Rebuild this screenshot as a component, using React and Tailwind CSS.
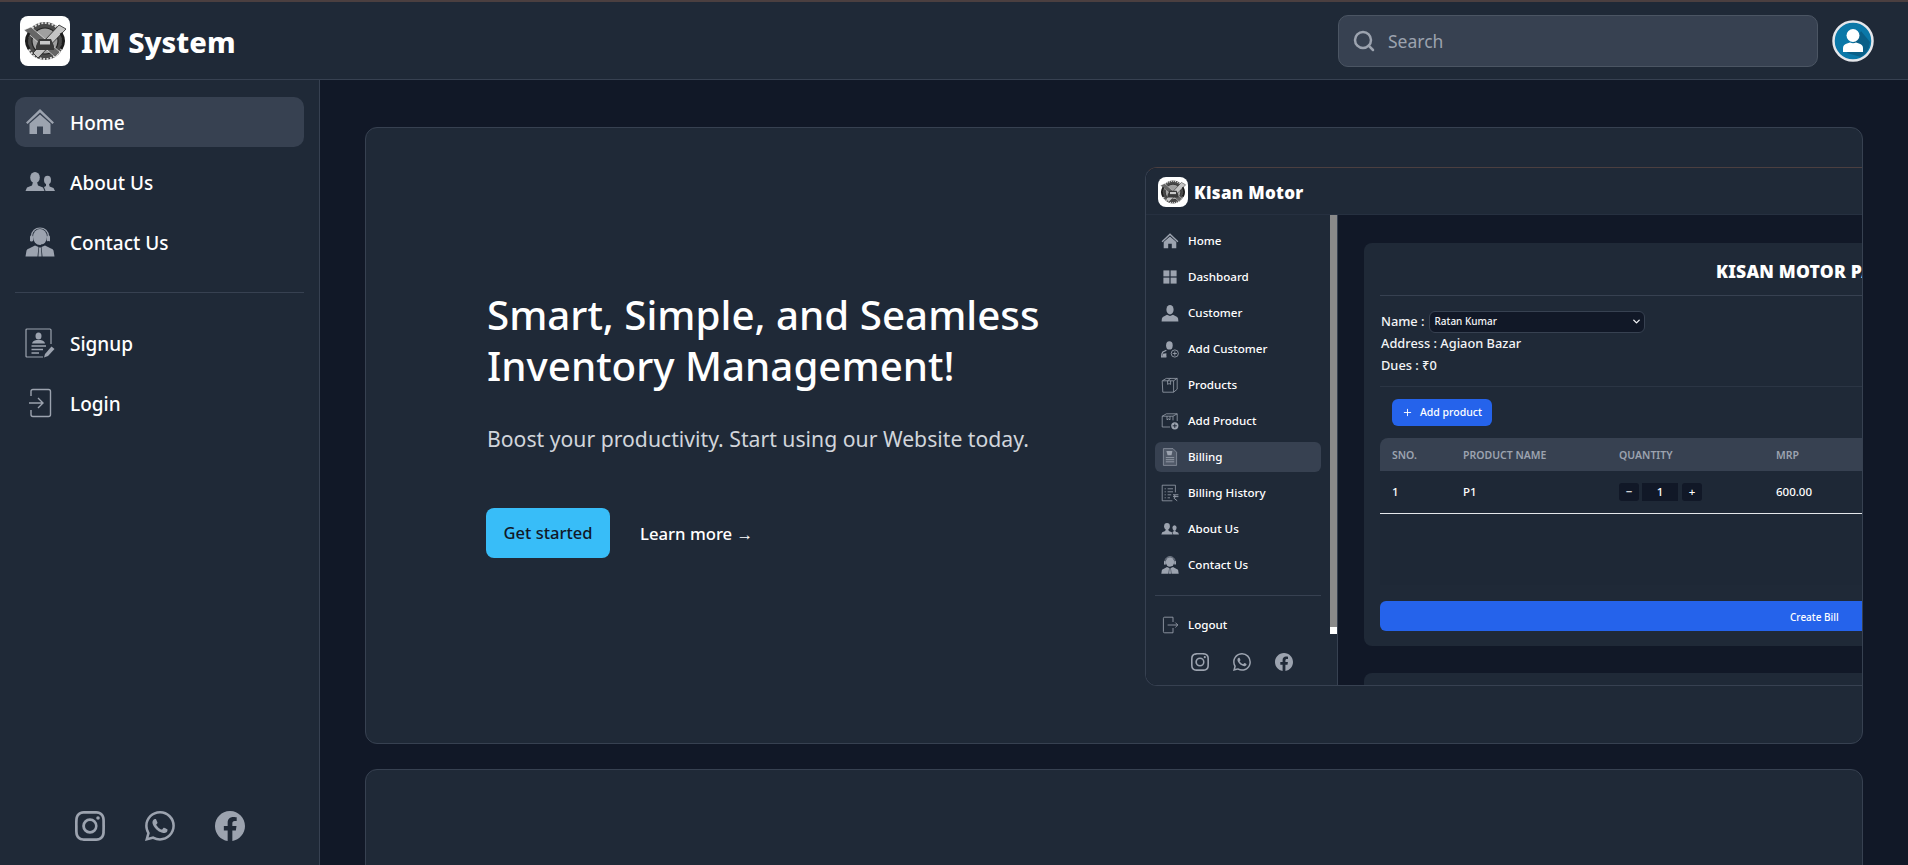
import React from 'react';
import { Search, ChevronDown, Plus } from 'lucide-react';
import { BsInstagram, BsWhatsapp, BsFacebook } from 'react-icons/bs';

const Logo = ({ className }) => (
  <div className={`bg-white rounded-lg flex items-center justify-center shrink-0 ${className}`}>
    <svg viewBox="0 0 50 50" className="w-full h-full">
      <circle cx="25" cy="25" r="19" fill="#4a4a4a" />
      <circle cx="25" cy="25" r="18" fill="none" stroke="#d8d8d8" strokeWidth="2" strokeDasharray="2 1.5" />
      <circle cx="25" cy="25" r="13" fill="#a0a0a0" />
      <circle cx="25" cy="25" r="13" fill="none" stroke="#222" strokeWidth="1.2" />
      <path d="M4 14 L11 11 L40 36 L35 41 Z" fill="#666" stroke="#fff" strokeWidth="0.6" />
      <path d="M46 13 L39 9 L13 37 L18 42 Z" fill="#c4c4c4" stroke="#222" strokeWidth="0.8" />
      <path d="M16 30 L19 23 H31 L34 30 V34 H16 Z" fill="#3a3a3a" />
      <rect x="20" y="25" width="10" height="3.5" fill="#c8c8c8" />
      <path d="M9 17 Q4 25 9 33" fill="none" stroke="#1c1c1c" strokeWidth="3" />
      <path d="M41 17 Q46 25 41 33" fill="none" stroke="#1c1c1c" strokeWidth="3" />
    </svg>
  </div>
);

const HomeIcon = ({ className }) => (
  <svg viewBox="0 0 30 30" fill="currentColor" className={className}>
    <path d="M15 2 L1 15.5 L2.6 17 L15 5.6 L27.4 17 L29 15.5 Z" />
    <path d="M4.5 16.8 L15 7.4 L25.5 16.8 V27 H18 V19.5 H12 V27 H4.5 Z" />
  </svg>
);

const GroupIcon = ({ className }) => (
  <svg viewBox="0 0 30 30" fill="currentColor" className={className}>
    <ellipse cx="10" cy="10.5" rx="4.8" ry="5.5" />
    <path d="M8 15 H12 L13 18.5 L18 20.5 L19.5 24 H0.5 L2 20.5 L7 18.5 Z" />
    <ellipse cx="22.5" cy="13" rx="3.5" ry="4.3" />
    <path d="M21 17 H24 L24.6 19.5 L28.5 21 L30 24 H20.5 L19 20 L21 19 Z" />
  </svg>
);

const AgentIcon = ({ className }) => (
  <svg viewBox="0 0 30 30" className={className}>
    <ellipse cx="15" cy="10" rx="7" ry="8" fill="currentColor" />
    <path d="M6.5 12 V9.5 C6.5 4 10.5 1 15 1 C19.5 1 23.5 4 23.5 9.5 V12" fill="none" stroke="currentColor" strokeWidth="1.2" />
    <rect x="5" y="8.5" width="3" height="6" rx="1.2" fill="currentColor" />
    <rect x="22" y="8.5" width="3" height="6" rx="1.2" fill="currentColor" />
    <path d="M23.5 14 C23 17 20 18 16 18" fill="none" stroke="#1f2937" strokeWidth="1.1" />
    <path d="M10 18.5 L13.5 20 L12.5 29.5 H0.5 L1.5 23.5 Q2 22 4 21.5 Z" fill="currentColor" />
    <path d="M20 18.5 L16.5 20 L17.5 29.5 H29.5 L28.5 23.5 Q28 22 26 21.5 Z" fill="currentColor" />
    <path d="M14 20.5 H16 L16.6 29.5 H13.4 Z" fill="currentColor" />
  </svg>
);

const SignupIcon = ({ className }) => (
  <svg viewBox="0 0 30 30" fill="none" className={className}>
    <path d="M18 29 H2 Q1 29 1 28 V2 Q1 1 2 1 H25 Q26 1 26 2 V16" stroke="currentColor" strokeWidth="1.2" />
    <ellipse cx="13.5" cy="8" rx="3" ry="3.6" fill="currentColor" />
    <path d="M7 15.5 Q7.5 12.5 11.5 12 H15.5 Q19.5 12.5 20 15.5 Z" fill="currentColor" />
    <path d="M6.5 18 H21 M6.5 21.5 H18 M6.5 25 H14" stroke="currentColor" strokeWidth="1.4" />
    <path d="M20 26 L26.5 18.5 L29.5 21 L23 28 L19 29.5 Z" fill="currentColor" />
  </svg>
);

const LoginIcon = ({ className }) => (
  <svg viewBox="0 0 30 30" fill="none" stroke="currentColor" strokeWidth="1.4" className={className}>
    <path d="M6 8 V3.5 Q6 1.5 8 1.5 H23.5 Q25.5 1.5 25.5 3.5 V26.5 Q25.5 28.5 23.5 28.5 H8 Q6 28.5 6 26.5 V22" />
    <path d="M4 15 H18 M13 10 L18 15 L13 20" />
  </svg>
);

const LogoutIcon = ({ className }) => (
  <svg viewBox="0 0 30 30" fill="none" stroke="currentColor" strokeWidth="1.4" className={className}>
    <path d="M20 10 V2 H6 Q4 2 4 4 V26 Q4 28 6 28 H20 V20" />
    <path d="M11 15 H28 M24 11 L28 15 L24 19" />
  </svg>
);

const GridIcon = ({ className }) => (
  <svg viewBox="0 0 30 30" fill="currentColor" className={className}>
    <rect x="4" y="4" width="10" height="10" />
    <rect x="16" y="4" width="10" height="10" />
    <rect x="4" y="16" width="10" height="10" />
    <rect x="16" y="16" width="10" height="10" />
  </svg>
);

const UserIcon = ({ className }) => (
  <svg viewBox="0 0 30 30" fill="currentColor" className={className}>
    <ellipse cx="15" cy="9.5" rx="6" ry="8" />
    <path d="M10 18 L15 20 L20 18 L27 21.5 Q29 23 29 29 H1 Q1 23 3 21.5 Z" />
  </svg>
);

const AddUserIcon = ({ className }) => (
  <svg viewBox="0 0 30 30" fill="none" className={className}>
    <ellipse cx="14" cy="9" rx="5.5" ry="7" fill="currentColor" />
    <path d="M9 17 L3 20 Q1 22 1 28 H9" stroke="currentColor" strokeWidth="2" />
    <path d="M2 28 L3 23 L9 22 L9 28 Z" fill="currentColor" />
    <circle cx="23" cy="22.5" r="6" stroke="currentColor" strokeWidth="1.4" />
    <path d="M23 19 V26 M19.5 22.5 H26.5" stroke="currentColor" strokeWidth="1.4" />
  </svg>
);

const BoxIcon = ({ className }) => (
  <svg viewBox="0 0 30 30" fill="none" stroke="currentColor" strokeWidth="1.3" className={className}>
    <path d="M2 8 L9 4 H27 V22 L21 27 H3 Z" />
    <path d="M3 8 H21 V27 M21 8 L27 4 M11 8 V14 L13.5 12.5 L16 14 V8 M11 8 L16 4" />
  </svg>
);

const AddBoxIcon = ({ className }) => (
  <svg viewBox="0 0 30 30" fill="none" stroke="currentColor" strokeWidth="1.3" className={className}>
    <path d="M2 7 L9 3 H27 V15 M2 7 V25 H15 M2 7 H20 V14 M20 7 L27 3 M10 7 V13 L12.5 11.5 L15 13 V7" />
    <circle cx="23" cy="23" r="6" fill="currentColor" stroke="none" />
    <path d="M23 19.5 V26.5 M19.5 23 H26.5" stroke="#1f2937" strokeWidth="1.6" />
  </svg>
);

const BillIcon = ({ className }) => (
  <svg viewBox="0 0 30 30" fill="none" className={className}>
    <path d="M4 1 H20 L26 7 V29 H4 Z" fill="currentColor" fillOpacity="0.25" stroke="currentColor" strokeWidth="1.1" />
    <path d="M9 5 H19 L17.5 12 H11 Z" fill="currentColor" />
    <path d="M8 16 H22 M8 19.5 H22 M8 23 H22" stroke="currentColor" strokeWidth="1.4" />
  </svg>
);

const BillHistoryIcon = ({ className }) => (
  <svg viewBox="0 0 30 30" fill="none" stroke="currentColor" strokeWidth="1.3" className={className}>
    <path d="M24 14 V2 H2 V28 H19" />
    <path d="M6 8 H8 M11 8 H20 M6 13 H8 M11 13 H20 M6 18 H8 M11 18 H17 M6 23 H8 M11 23 H15" />
    <path d="M20 18 H29 M20 21 H29 M22 18 Q26 20 22 24 L27 28" strokeWidth="1.5" />
  </svg>
);

const Avatar = () => (
  <svg viewBox="0 0 42 42" className="w-[42px] h-[42px]">
    <circle cx="21" cy="21" r="19.5" fill="#0b78a8" stroke="#e5e7eb" strokeWidth="2.5" />
    <path d="M29 11 L38 22 Q37 32 29 37 L15 33 Z" fill="#0a5f87" />
    <circle cx="21" cy="15.5" r="6.5" fill="#fff" />
    <path d="M11 32 V28 Q11 24.5 15 23.5 L18 22.5 Q21 24 24 22.5 L27 23.5 Q31 24.5 31 28 V32 Z" fill="#fff" />
  </svg>
);

const navTop = [
  { label: 'Home', Icon: HomeIcon, active: true },
  { label: 'About Us', Icon: GroupIcon },
  { label: 'Contact Us', Icon: AgentIcon },
];
const navBottom = [
  { label: 'Signup', Icon: SignupIcon },
  { label: 'Login', Icon: LoginIcon },
];

const NavItem = ({ label, Icon, active }) => (
  <div className={`h-[50px] rounded-[10px] flex items-center pl-[10px] gap-[15px] ${active ? 'bg-[#374151]' : ''}`}>
    <Icon className="w-[30px] h-[30px] text-[#9ca3af] shrink-0" />
    <span className="text-[19px] font-medium text-white mt-[3px]">{label}</span>
  </div>
);

const frameNav = [
  { label: 'Home', Icon: HomeIcon },
  { label: 'Dashboard', Icon: GridIcon },
  { label: 'Customer', Icon: UserIcon },
  { label: 'Add Customer', Icon: AddUserIcon },
  { label: 'Products', Icon: BoxIcon },
  { label: 'Add Product', Icon: AddBoxIcon },
  { label: 'Billing', Icon: BillIcon, active: true },
  { label: 'Billing History', Icon: BillHistoryIcon },
  { label: 'About Us', Icon: GroupIcon },
  { label: 'Contact Us', Icon: AgentIcon },
];

const FrameNavItem = ({ label, Icon, active }) => (
  <div className={`h-[30px] rounded-md flex items-center pl-[6px] gap-[9px] ${active ? 'bg-[#374151]' : ''}`}>
    <Icon className="w-[18px] h-[18px] text-[#9ca3af] shrink-0" />
    <span className="text-[11.6px] font-medium text-white">{label}</span>
  </div>
);

// the picture of the billing page inside the hero card
const BillingPreview = () => (
  <div className="w-[900px] h-[519px] shrink-0 flex flex-col bg-[#111827] rounded-l-xl border border-[#374151] border-t-[#4b3f40] overflow-hidden">
    <div className="h-[47px] shrink-0 bg-[#1f2937] flex items-center pl-[12px] pt-[2px] gap-[6px] border-b border-[#263040]">
      <Logo className="w-[30px] h-[30px]" />
      <span className="text-[17px] font-black text-white tracking-[0.3px] mt-[2px]">Kisan Motor</span>
    </div>
    <div className="flex-1 flex min-h-0">
      <div className="w-[192px] shrink-0 flex bg-[#1f2937] border-r border-[#374151]">
        <div className="w-[185px] pl-[9px] pr-[9px] pt-[11px] flex flex-col">
          <div className="flex flex-col gap-[6px]">
            {frameNav.map((item) => (
              <FrameNavItem key={item.label} {...item} />
            ))}
          </div>
          <div className="border-t border-[#374151] mt-[15px] mb-[14px]" />
          <FrameNavItem label="Logout" Icon={LogoutIcon} />
          <div className="flex justify-center gap-[24px] mt-[13px] text-[#9ca3af] text-[18px] pl-[7px]">
            <BsInstagram />
            <BsWhatsapp />
            <BsFacebook />
          </div>
        </div>
        <div className="w-[7px] h-[419px] bg-[#8a8a8a] flex flex-col justify-end">
          <div className="h-[7px] bg-white" />
        </div>
      </div>
      <div className="flex-1 pl-[26px] pt-[28px] flex flex-col gap-[27px] min-w-0">
        <div className="h-[403px] shrink-0 bg-[#1f2937] rounded-l-lg pl-[16px] pt-[16px] flex flex-col">
          <div className="h-[37px] shrink-0 border-b border-[#374151] pl-[336px] text-[17.5px] leading-[24px] font-black tracking-[0.2px] text-white whitespace-nowrap">
            KISAN MOTOR PARTS
          </div>
          <div className="pt-[14px] pl-[1px] text-[12.8px] font-medium text-[#f3f4f6] leading-[21px]">
            <div className="flex items-center gap-[4px] h-[23px]">
              Name :
              <div className="w-[216px] h-[22px] bg-[#111827] border border-[#374151] rounded-md flex items-center justify-between pl-[5px] pr-[2px] text-[10px] text-[#f3f4f6]">
                Ratan Kumar
                <ChevronDown className="w-[11px] h-[11px]" strokeWidth={3} />
              </div>
            </div>
            <div>Address : Agiaon Bazar</div>
            <div className="mt-[1px]">Dues : ₹0</div>
          </div>
          <div className="border-b border-[#2b3544] mt-[10px]" />
          <div className="pl-[12px] pt-[12px]">
            <div className="w-[100px] h-[27px] bg-[#2563eb] rounded-md flex items-center justify-center gap-[7px] text-[10.5px] font-medium text-white">
              <Plus className="w-[11px] h-[11px]" />
              Add product
            </div>
          </div>
          <div className="mt-[12px] h-[147px] shrink-0 rounded-t-lg bg-[#1e2836]">
            <div className="h-[33px] pt-[2px] bg-[#374151] rounded-t-lg flex items-center text-[10.5px] font-semibold text-[#9ca3af]">
              <span className="w-[83px] pl-[12px]">SNO.</span>
              <span className="w-[156px]">PRODUCT NAME</span>
              <span className="w-[157px]">QUANTITY</span>
              <span>MRP</span>
            </div>
            <div className="h-[43px] border-b border-[#e5e7eb] flex items-center text-[11.5px] font-medium text-white">
              <span className="w-[83px] pl-[12px]">1</span>
              <span className="w-[156px]">P1</span>
              <div className="w-[157px] flex items-center gap-[3px]">
                <span className="w-[20px] h-[18px] bg-[#111827] rounded-[3px] flex items-center justify-center">−</span>
                <span className="w-[36px] h-[18px] bg-[#111827] flex items-center justify-center">1</span>
                <span className="w-[20px] h-[18px] bg-[#111827] rounded-[3px] flex items-center justify-center ml-[1px]">+</span>
              </div>
              <span>600.00</span>
            </div>
          </div>
          <div className="mt-[16px] h-[30px] pt-[3px] shrink-0 bg-[#2563eb] rounded-l-md flex items-center pl-[410px] text-[10px] font-medium text-white">
            Create Bill
          </div>
        </div>
        <div className="h-[100px] shrink-0 bg-[#1f2937] rounded-l-lg" />
      </div>
    </div>
  </div>
);

const App = () => {
  return (
    <div className="h-screen flex flex-col overflow-hidden bg-[#111827] font-['Noto_Sans',sans-serif]">
      <div className="h-[2px] shrink-0 bg-[#4b3f40]" />
      <header className="h-[78px] shrink-0 bg-[#1f2937] border-b border-[#374151] flex items-center pl-[20px]">
        <Logo className="w-[50px] h-[50px]" />
        <span className="ml-[11px] mt-[3px] text-[29px] font-extrabold text-white">IM System</span>
        <div className="ml-auto w-[480px] h-[52px] bg-[#374151] border border-[#4b5563] rounded-[10px] flex items-center pl-[13px] gap-[12px]">
          <Search className="w-[24px] h-[24px] text-[#9ca3af]" strokeWidth={2.5} />
          <span className="text-[17.5px] text-[#9ca3af] mt-[1px]">Search</span>
        </div>
        <div className="ml-[14px] mr-[34px] flex">
          <Avatar />
        </div>
      </header>
      <div className="flex-1 flex min-h-0">
        <aside className="w-[320px] shrink-0 bg-[#1f2937] border-r border-[#374151] px-[15px] pt-[17px] flex flex-col">
          <nav className="flex flex-col gap-[10px]">
            {navTop.map((item) => (
              <NavItem key={item.label} {...item} />
            ))}
          </nav>
          <div className="border-t border-[#374151] mt-[25px] mb-[25px]" />
          <nav className="flex flex-col gap-[10px]">
            {navBottom.map((item) => (
              <NavItem key={item.label} {...item} />
            ))}
          </nav>
          <div className="mt-auto mb-[24px] flex justify-center gap-[40px] text-[#9ca3af] text-[30px]">
            <BsInstagram />
            <BsWhatsapp />
            <BsFacebook />
          </div>
        </aside>
        <main className="flex-1 min-w-0 overflow-hidden pl-[45px] pr-[45px] pt-[47px] flex flex-col gap-[25px]">
          <section className="h-[617px] shrink-0 bg-[#1f2937] border border-[#374151] rounded-xl overflow-hidden flex">
            <div className="w-[779px] shrink-0 pl-[120px] pt-[161px]">
              <h1 className="ml-[1px] text-[40.3px] leading-[51px] font-medium text-white whitespace-nowrap">
                Smart, Simple, and Seamless
                <br />
                Inventory Management!
              </h1>
              <p className="ml-[1px] mt-[32px] text-[21.2px] leading-[32px] text-[#d1d5db] whitespace-nowrap">
                Boost your productivity. Start using our Website today.
              </p>
              <div className="mt-[53px] flex items-center gap-[30px]">
                <div className="w-[124px] h-[50px] bg-[#38bdf8] rounded-lg flex items-center justify-center text-[16.5px] font-medium text-[#111827]">
                  Get started
                </div>
                <span className="text-[16.7px] font-medium text-white mt-[2px]">Learn more →</span>
              </div>
            </div>
            <div className="pt-[39px]">
              <BillingPreview />
            </div>
          </section>
          <section className="h-[300px] shrink-0 bg-[#1f2937] border border-[#374151] rounded-xl" />
        </main>
      </div>
    </div>
  );
};

export default App;
